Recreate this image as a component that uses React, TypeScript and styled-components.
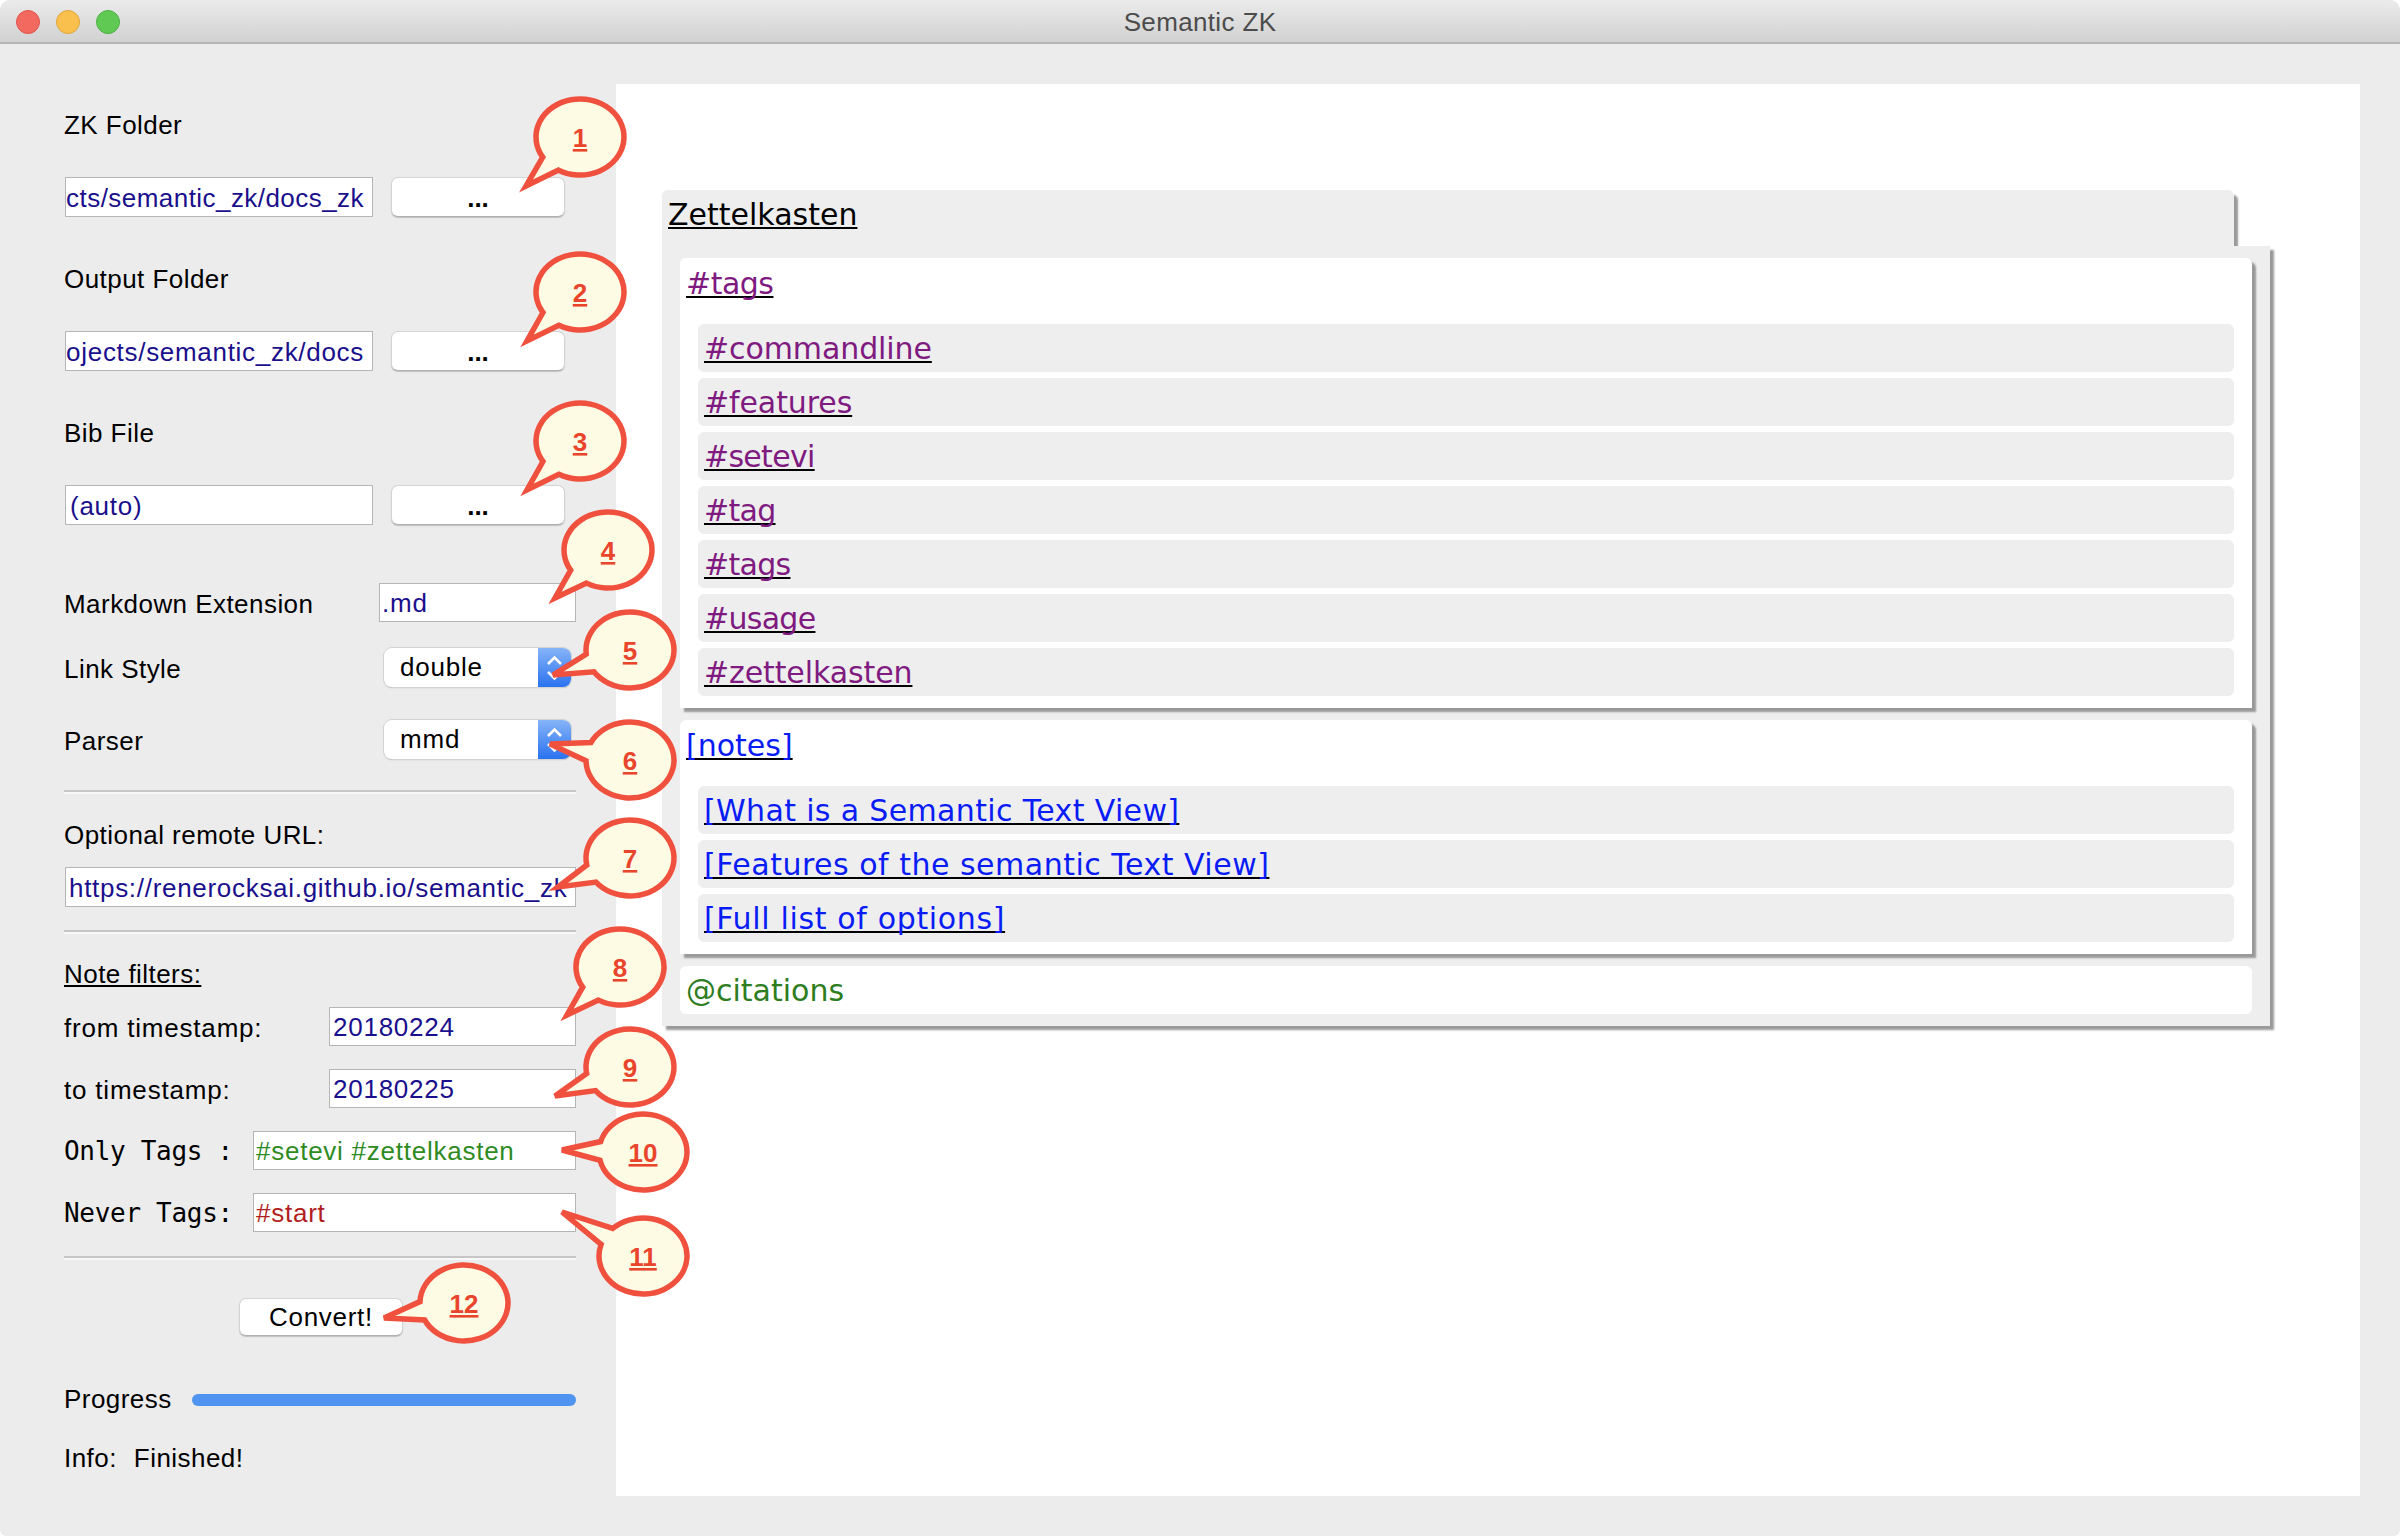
// App.tsx
import React from 'react';
import styled, { createGlobalStyle } from 'styled-components';

const GlobalStyle = createGlobalStyle`
  html, body {
    margin: 0;
    padding: 0;
    background: #fff;
  }
`;

const sans = `"Liberation Sans", Arial, sans-serif`;

const Window = styled.div`
  position: relative;
  width: 2400px;
  height: 1536px;
  background: #ececec;
  border-radius: 10px 10px 6px 6px;
  overflow: hidden;
  font-family: ${sans};
  font-size: 26px;
  color: #000;
`;

const TitleBar = styled.header`
  position: relative;
  height: 44px;
  box-sizing: border-box;
  padding-top: 2px;
  display: flex;
  align-items: center;
  justify-content: center;
  background: linear-gradient(#ebebeb, #d1d1d1);
  border-bottom: 2px solid #b4b4b4;
  color: #4c4c4c;
  letter-spacing: 0.35px;
`;

const Lights = styled.div`
  position: absolute;
  left: 16px;
  top: 10px;
  display: flex;
  gap: 16px;
`;

const Light = styled.span<{ $fill: string; $edge: string }>`
  width: 24px;
  height: 24px;
  border-radius: 50%;
  box-sizing: border-box;
  background: ${(p) => p.$fill};
  border: 1px solid ${(p) => p.$edge};
`;

const Content = styled.div`
  display: flex;
  height: 1492px;
`;

const Sidebar = styled.aside`
  width: 616px;
  box-sizing: border-box;
  flex: none;
  padding: 66px 40px 0 64px;
  display: flex;
  flex-direction: column;
  letter-spacing: 0.45px;
`;

const Label = styled.div<{ $top?: number; $underline?: boolean }>`
  height: 30px;
  line-height: 30px;
  margin-top: ${(p) => p.$top ?? 0}px;
  white-space: pre;
  text-decoration: ${(p) => (p.$underline ? 'underline' : 'none')};
`;

const Row = styled.div<{ $top: number }>`
  display: flex;
  align-items: center;
  justify-content: space-between;
  margin-top: ${(p) => p.$top}px;
`;

const RowLabel = styled.span<{ $track?: number }>`
  padding-top: 3px;
  white-space: pre;
  letter-spacing: ${(p) => p.$track ?? 0.45}px;
`;

const ProgressLabel = styled.span`
  white-space: pre;
`;

const MonoLabel = styled.span`
  white-space: pre;
  font-family: "DejaVu Sans Mono", monospace;
  font-size: 26px;
  letter-spacing: -0.3px;
`;

const Field = styled.div<{ $width: number; $height?: number; $color?: string; $end?: boolean; $pad?: number; $left?: number; $track?: number }>`
  width: ${(p) => p.$width}px;
  height: ${(p) => p.$height ?? 39}px;
  margin-left: ${(p) => p.$left ?? 0}px;
  box-sizing: border-box;
  flex: none;
  display: flex;
  align-items: center;
  justify-content: ${(p) => (p.$end ? 'flex-end' : 'flex-start')};
  overflow: hidden;
  white-space: nowrap;
  background: #fff;
  border: 1px solid #b5b5b5;
  padding: 2px ${(p) => (p.$end ? 8 : 0)}px 0 ${(p) => p.$pad ?? 3}px;
  color: ${(p) => p.$color ?? '#1a0f8c'};
  letter-spacing: ${(p) => p.$track ?? 0.75}px;
`;

const PathRow = styled.div<{ $top: number }>`
  display: flex;
  gap: 18px;
  margin: ${(p) => p.$top}px 0 0 1px;
`;

const PushButton = styled.button<{ $width: number; $height: number; $left?: number }>`
  width: ${(p) => p.$width}px;
  height: ${(p) => p.$height}px;
  margin-left: ${(p) => p.$left ?? 0}px;
  padding: 0;
  flex: none;
  background: #fff;
  border: 1px solid #d4d4d4;
  border-bottom-color: #b0b0b0;
  border-radius: 7px;
  box-shadow: 0 1px 1px #c0c0c0;
  font-family: ${sans};
  font-size: 26px;
  letter-spacing: 0.7px;
  color: #000;
`;

const BrowseButton = styled(PushButton)`
  padding-top: 3px;
  font-weight: 700;
  letter-spacing: 0;
`;

const Combo = styled.div`
  width: 187px;
  height: 39px;
  margin-right: 5px;
  display: flex;
  border-radius: 8px;
  overflow: hidden;
  background: #fff;
  box-shadow: 0 0 0 1px #d2d2d2, 0 1px 1px #aaa;
`;

const ComboText = styled.span`
  flex: 1;
  padding-left: 16px;
  line-height: 38px;
  letter-spacing: 0.8px;
`;

const ComboArrows = styled.span`
  width: 33px;
  display: flex;
  align-items: center;
  justify-content: center;
  background: linear-gradient(#86b4f8, #2a72ef);
`;

const Divider = styled.hr<{ $top: number }>`
  width: 100%;
  height: 2px;
  margin: ${(p) => p.$top}px 0 0;
  border: none;
  background: #c6c6c6;
  border-bottom: 2px solid #f8f8f8;
`;

const ProgressTrack = styled.div`
  width: 384px;
  height: 12px;
  border-radius: 6px;
  background: #4f94f0;
`;

const InfoLine = styled.div`
  display: flex;
  gap: 17px;
  height: 30px;
  line-height: 30px;
  margin-top: 28px;
`;

const Main = styled.main`
  flex: 1;
  margin: 40px 40px 40px 0;
  padding: 106px 0 0 46px;
  background: #fff;
  font-family: "DejaVu Sans", Verdana, sans-serif;
  font-size: 30px;
`;

const Tree = styled.div`
  width: 1608px;
`;

const TreeHeader = styled.div`
  width: 1572px;
  height: 56px;
  box-sizing: border-box;
  padding-left: 6px;
  line-height: 50px;
  background: #eee;
  border-radius: 6px 6px 0 0;
  box-shadow: 5px 4px 2px -1px #999;
`;

const TreeBody = styled.div`
  position: relative;
  display: flex;
  flex-direction: column;
  gap: 12px;
  padding: 12px 18px;
  background: #eee;
  box-shadow: 4px 4px 2px #999;
`;

const Panel = styled.section`
  padding-bottom: 12px;
  background: #fff;
  border-radius: 6px 6px 0 0;
  box-shadow: 4px 4px 2px #999;
`;

const PanelTitle = styled.div`
  height: 52px;
  padding-left: 6px;
  line-height: 52px;
`;

const ItemList = styled.div`
  display: flex;
  flex-direction: column;
  gap: 6px;
  margin: 14px 18px 0;
`;

const Item = styled.div`
  height: 48px;
  padding-left: 6px;
  line-height: 50px;
  background: #eee;
  border-radius: 6px;
`;

const Citations = styled.div`
  height: 48px;
  padding-left: 6px;
  line-height: 50px;
  background: #fff;
  border-radius: 6px;
  color: #2e7d1e;
`;

const Link = styled.a<{ $color: string; $track?: number }>`
  color: ${(p) => p.$color};
  letter-spacing: ${(p) => p.$track ?? 0}px;
  text-decoration: underline;
  text-decoration-color: #000;
  text-decoration-thickness: 2px;
  text-decoration-skip-ink: none;
  text-underline-offset: 2px;
`;

const Overlay = styled.svg`
  position: absolute;
  left: 0;
  top: 0;
  pointer-events: none;
`;

const BubbleShape = styled.path`
  fill: #fdfbe3;
  stroke: #f0513f;
  stroke-width: 5.5;
  stroke-linejoin: miter;
`;

const BubbleNumber = styled.text`
  font-family: ${sans};
  font-size: 26px;
  font-weight: 700;
  fill: #e8452c;
  text-anchor: middle;
  text-decoration: underline;
`;

const RX = 44;
const RY = 38;

const Chevrons: React.FC = () => (
  <svg width="17" height="26" viewBox="0 0 17 26">
    <path d="M2 9 L8.5 2.5 L15 9 M2 17 L8.5 23.5 L15 17" fill="none" stroke="#fff" strokeWidth="2.6" />
  </svg>
);

// speech bubble with its tail pointing at (tx, ty)
const Bubble: React.FC<{ n: number; cx: number; cy: number; tx: number; ty: number }> = ({ n, cx, cy, tx, ty }) => {
  const angle = Math.atan2((ty - cy) / RY, (tx - cx) / RX);
  const spread = 0.25;
  const point = (a: number) => `${cx + RX * Math.cos(a)} ${cy + RY * Math.sin(a)}`;
  const d = `M${point(angle + spread)} A${RX} ${RY} 0 1 1 ${point(angle - spread)} L${tx} ${ty} Z`;
  return (
    <g>
      <BubbleShape d={d} />
      <BubbleNumber x={cx} y={cy + 10}>
        {n}
      </BubbleNumber>
    </g>
  );
};

const bubbles = [
  { n: 1, cx: 580, cy: 137, tx: 526, ty: 186 },
  { n: 2, cx: 580, cy: 292, tx: 527, ty: 341 },
  { n: 3, cx: 580, cy: 441, tx: 527, ty: 490 },
  { n: 4, cx: 608, cy: 550, tx: 555, ty: 598 },
  { n: 5, cx: 630, cy: 650, tx: 553, ty: 675 },
  { n: 6, cx: 630, cy: 760, tx: 550, ty: 744 },
  { n: 7, cx: 630, cy: 858, tx: 558, ty: 887 },
  { n: 8, cx: 620, cy: 967, tx: 567, ty: 1015 },
  { n: 9, cx: 630, cy: 1067, tx: 555, ty: 1096 },
  { n: 10, cx: 643, cy: 1152, tx: 562, ty: 1150 },
  { n: 11, cx: 643, cy: 1256, tx: 562, ty: 1212 },
  { n: 12, cx: 464, cy: 1303, tx: 384, ty: 1318 },
];

const tags = ['#commandline', '#features', '#setevi', '#tag', '#tags', '#usage', '#zettelkasten'];
const notes = [
  { title: '[What is a Semantic Text View]', track: 0.35 },
  { title: '[Features of the semantic Text View]', track: 0.5 },
  { title: '[Full list of options]', track: 0.65 },
];

const App: React.FC = () => {
  return (
    <Window>
      <GlobalStyle />
      <TitleBar>
        <Lights>
          <Light $fill="#f4695f" $edge="#e0534a" />
          <Light $fill="#fac04d" $edge="#e0a63c" />
          <Light $fill="#5fc954" $edge="#50b045" />
        </Lights>
        Semantic ZK
      </TitleBar>

      <Content>
        <Sidebar>
          <Label>ZK Folder</Label>
          <PathRow $top={37}>
            <Field $width={308} $height={40} $end $pad={0} $track={0.45}>cts/semantic_zk/docs_zk</Field>
            <BrowseButton $width={174} $height={40}>...</BrowseButton>
          </PathRow>
          <Label $top={47}>Output Folder</Label>
          <PathRow $top={37}>
            <Field $width={308} $height={40} $end $pad={0} $track={0.7}>ojects/semantic_zk/docs</Field>
            <BrowseButton $width={174} $height={40}>...</BrowseButton>
          </PathRow>
          <Label $top={47}>Bib File</Label>
          <PathRow $top={37}>
            <Field $width={308} $height={40} $pad={4}>(auto)</Field>
            <BrowseButton $width={174} $height={40}>...</BrowseButton>
          </PathRow>

          <Row $top={58}>
            <RowLabel>Markdown Extension</RowLabel>
            <Field $width={197} $pad={2}>.md</Field>
          </Row>
          <Row $top={26}>
            <RowLabel>Link Style</RowLabel>
            <Combo>
              <ComboText>double</ComboText>
              <ComboArrows><Chevrons /></ComboArrows>
            </Combo>
          </Row>
          <Row $top={33}>
            <RowLabel>Parser</RowLabel>
            <Combo>
              <ComboText>mmd</ComboText>
              <ComboArrows><Chevrons /></ComboArrows>
            </Combo>
          </Row>

          <Divider $top={31} />
          <Label $top={26}>Optional remote URL:</Label>
          <Row $top={17}>
            <Field $width={511} $height={40} $pad={3} $left={1} $track={0.7}>https://renerocksai.github.io/semantic_zk</Field>
          </Row>
          <Divider $top={23} />

          <Label $top={25} $underline>Note filters:</Label>
          <Row $top={18}>
            <RowLabel $track={0.8}>from timestamp:</RowLabel>
            <Field $width={247}>20180224</Field>
          </Row>
          <Row $top={23}>
            <RowLabel $track={0.8}>to timestamp:</RowLabel>
            <Field $width={247}>20180225</Field>
          </Row>
          <Row $top={23}>
            <MonoLabel>Only Tags :</MonoLabel>
            <Field $width={323} $pad={2} $color="#2e8b22">#setevi #zettelkasten</Field>
          </Row>
          <Row $top={23}>
            <MonoLabel>Never Tags:</MonoLabel>
            <Field $width={323} $pad={2} $color="#b01e1e">#start</Field>
          </Row>
          <Divider $top={24} />

          <Row $top={38}>
            <PushButton $width={164} $height={38} $left={175}>Convert!</PushButton>
          </Row>
          <Row $top={48}>
            <ProgressLabel>Progress</ProgressLabel>
            <ProgressTrack />
          </Row>
          <InfoLine>
            <span>Info:</span>
            <span>Finished!</span>
          </InfoLine>
        </Sidebar>

        <Main>
          <Tree>
            <TreeHeader>
              <Link $color="#000">Zettelkasten</Link>
            </TreeHeader>
            <TreeBody>
              <Panel>
                <PanelTitle>
                  <Link $color="#7f1a80" $track={-0.5}>#tags</Link>
                </PanelTitle>
                <ItemList>
                  {tags.map((tag) => (
                    <Item key={tag}>
                      <Link $color="#7f1a80" $track={tag.length < 8 ? -0.7 : -0.1}>{tag}</Link>
                    </Item>
                  ))}
                </ItemList>
              </Panel>
              <Panel>
                <PanelTitle>
                  <Link $color="#0a1cf5">[notes]</Link>
                </PanelTitle>
                <ItemList>
                  {notes.map((note) => (
                    <Item key={note.title}>
                      <Link $color="#0a1cf5" $track={note.track}>{note.title}</Link>
                    </Item>
                  ))}
                </ItemList>
              </Panel>
              <Citations>@citations</Citations>
            </TreeBody>
          </Tree>
        </Main>
      </Content>

      <Overlay width="2400" height="1536" viewBox="0 0 2400 1536">
        {bubbles.map((b) => (
          <Bubble key={b.n} {...b} />
        ))}
      </Overlay>
    </Window>
  );
};

export default App;
